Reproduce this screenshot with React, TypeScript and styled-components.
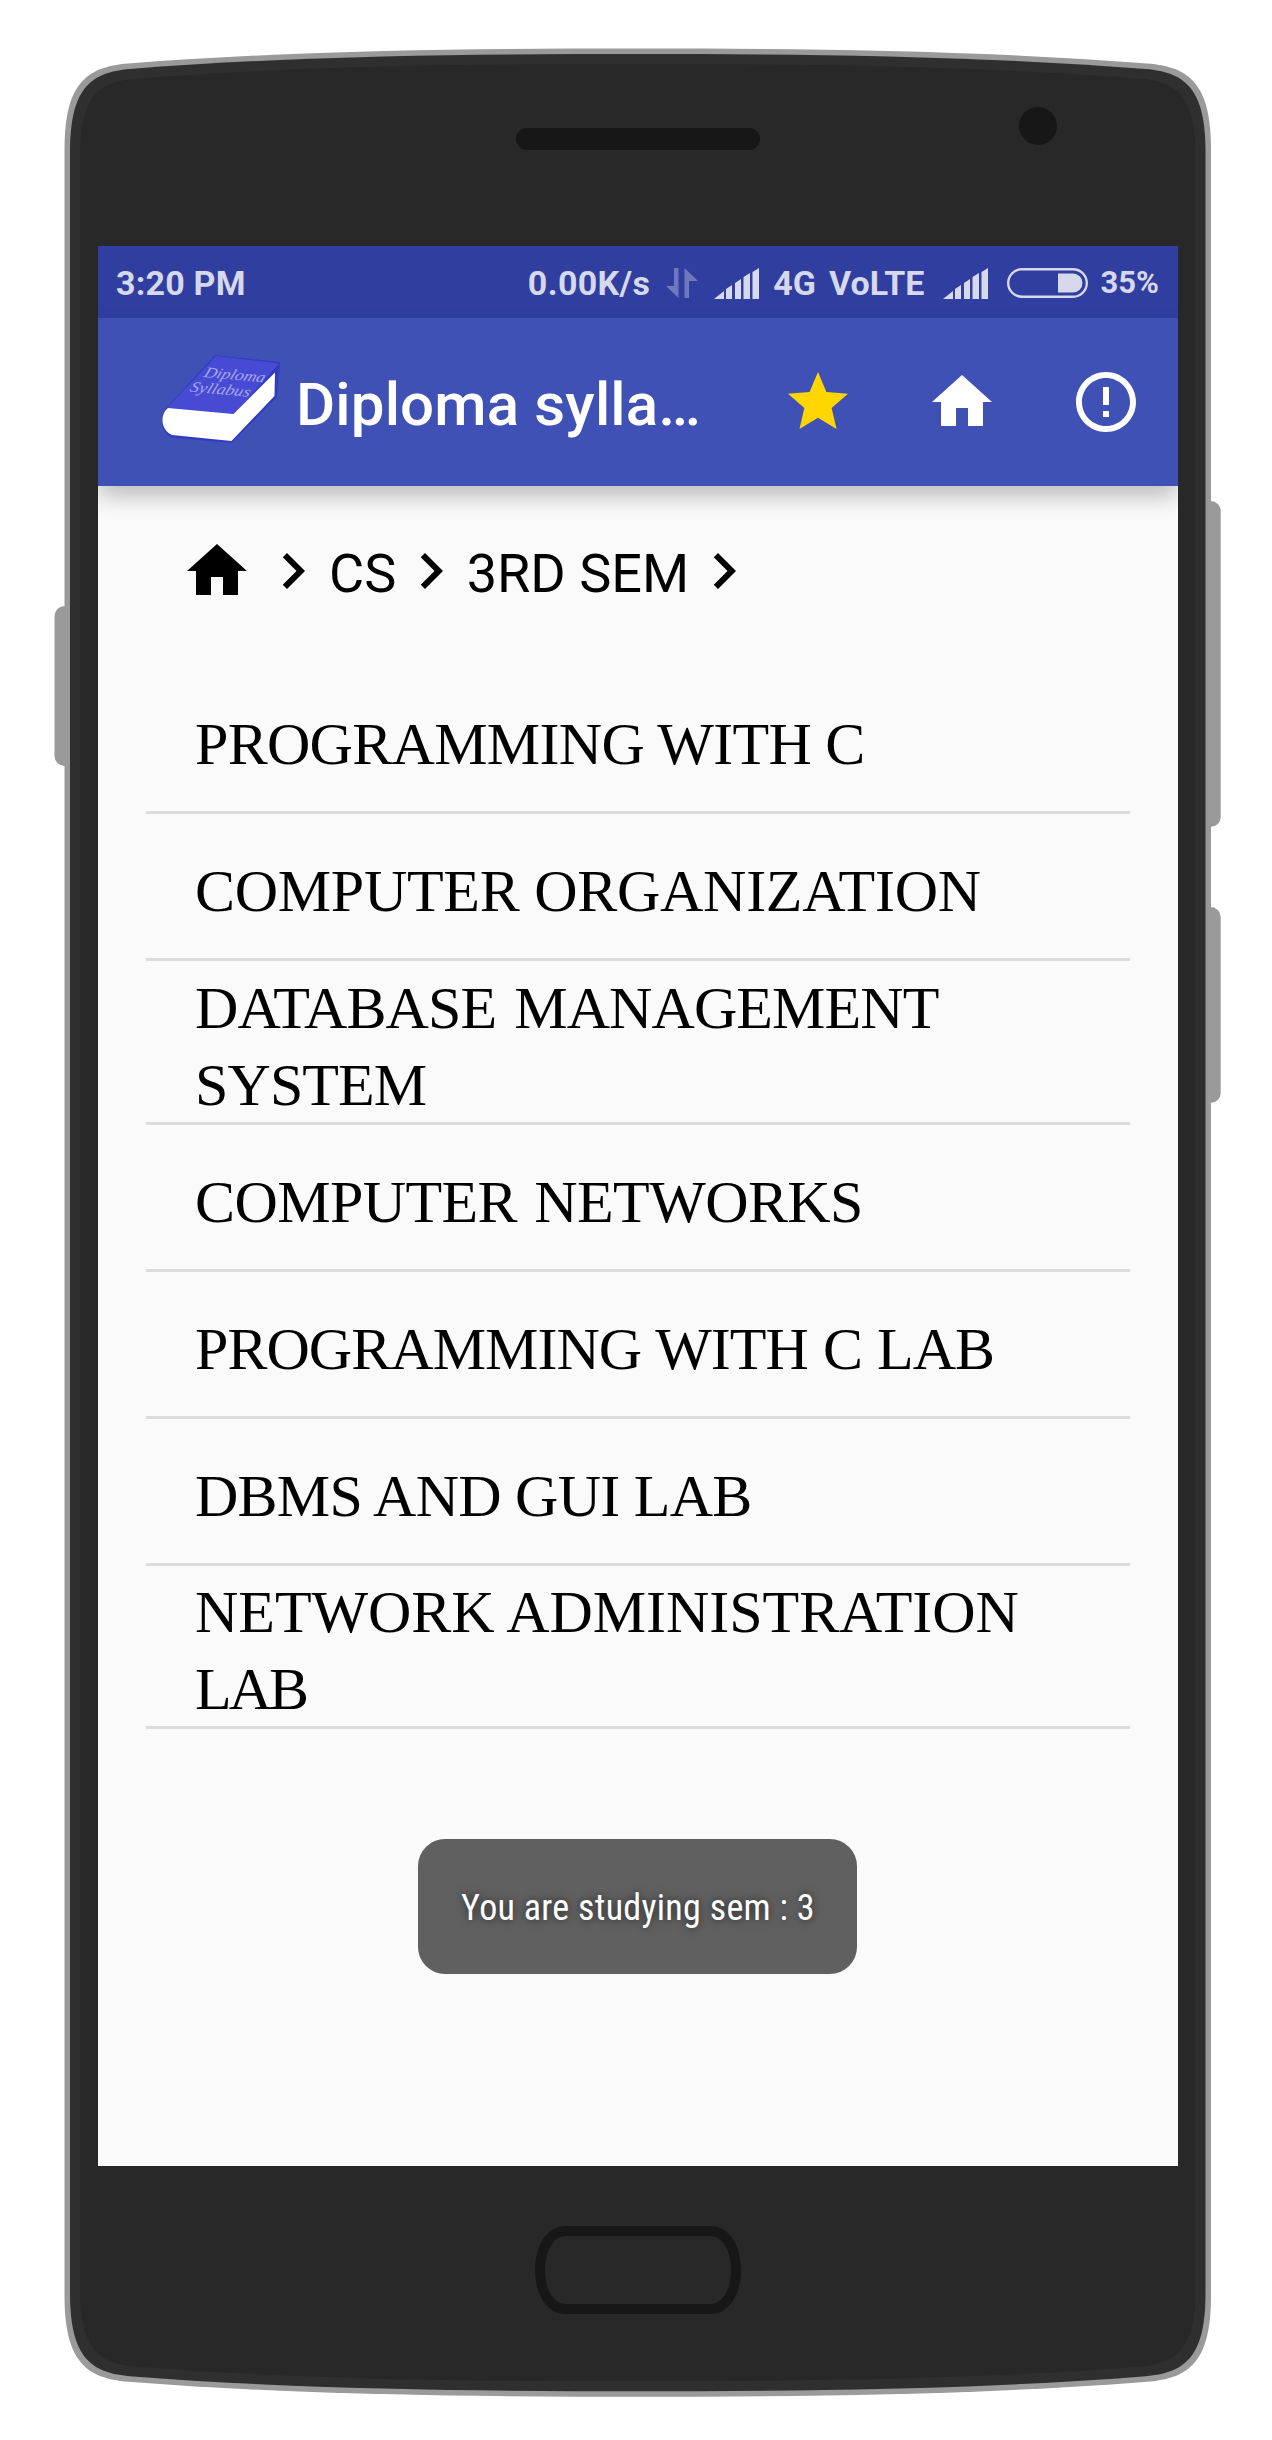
import React from "react";
import styled, { createGlobalStyle } from "styled-components";

const GlobalStyle = createGlobalStyle`
  * { box-sizing: border-box; }
  html, body { margin: 0; padding: 0; background: #fff; }
`;

const Stage = styled.main`
  position: relative;
  width: 1272px;
  height: 2440px;
  padding: 246px 94px 0 98px;
  background: #fff;
  overflow: hidden;
  font-family: Roboto, "Liberation Sans", sans-serif;
`;

const DeviceArt = styled.svg`
  position: absolute;
  inset: 0;
  display: block;
`;

const Screen = styled.section`
  position: relative;
  display: flex;
  flex-direction: column;
  width: 1080px;
  height: 1920px;
  background: #fafafa;
  overflow: hidden;
`;

const StatusBar = styled.header`
  display: flex;
  align-items: center;
  height: 72px;
  padding: 2px 19px 0 18px;
  background: #303e9f;
  color: #d6d8ec;
  flex: none;
`;

const StatusText = styled.span<{ $size?: number; $left?: number; $track?: number }>`
  font-size: ${(p) => p.$size ?? 34}px;
  font-weight: 700;
  line-height: 40px;
  letter-spacing: ${(p) => p.$track ?? 0}px;
  margin-left: ${(p) => p.$left ?? 0}px;
  white-space: nowrap;
`;

const StatusGroup = styled.div`
  display: flex;
  align-items: center;
  margin-left: auto;
`;

const Glyph = styled.svg<{ $left?: number; $size?: number }>`
  display: block;
  flex: none;
  margin-left: ${(p) => p.$left ?? 0}px;
  ${(p) => (p.$size ? `width: ${p.$size}px; height: ${p.$size}px;` : "")}
`;

const AppBar = styled.nav`
  position: relative;
  z-index: 1;
  display: flex;
  align-items: center;
  height: 168px;
  padding: 0 36px 0 54px;
  background: #3f51b5;
  box-shadow: 0 12px 21px -1px rgba(0, 0, 0, 0.24);
  color: #fff;
  flex: none;
`;

const Title = styled.h1`
  margin: 6px 0 0 12px;
  font-size: 60px;
  font-weight: 500;
  line-height: 72px;
  letter-spacing: 0.16px;
  white-space: nowrap;
`;

const Actions = styled.div`
  display: flex;
  gap: 72px;
  margin-left: auto;
`;

const Breadcrumb = styled.div`
  display: flex;
  align-items: center;
  height: 72px;
  margin: 49px 0 60px;
  padding-left: 83px;
  color: #000;
  flex: none;
`;

const Crumb = styled.span`
  margin: 5px -1.5px 0 0;
  font-size: 54px;
  line-height: 72px;
  white-space: nowrap;
`;

const SubjectList = styled.ul`
  margin: 0 48px;
  padding: 0;
  list-style: none;
`;

const Subject = styled.li<{ $height: number }>`
  display: flex;
  flex-direction: column;
  justify-content: center;
  height: ${(p) => p.$height}px;
  padding: 10px 0 0 49px;
  border-bottom: 3px solid #dcdcdc;
  color: #000;
  font-family: "Liberation Serif", "Times New Roman", serif;
  font-size: 60px;
  line-height: 77px;
  white-space: nowrap;
`;

const SubjectLine = styled.span<{ $track: number; $gap?: number }>`
  flex: none;
  letter-spacing: ${(p) => p.$track}px;
  word-spacing: ${(p) => p.$gap ?? 0}px;
`;

const Toast = styled.div`
  position: absolute;
  left: 320px;
  top: 1593px;
  display: flex;
  align-items: center;
  justify-content: center;
  width: 439px;
  height: 135px;
  padding: 2px 0 0 1px;
  border-radius: 27px;
  background: #606060;
  color: #fff;
`;

const ToastText = styled.span`
  font-family: "Roboto Condensed", Roboto, sans-serif;
  font-size: 36px;
  font-stretch: condensed;
  letter-spacing: 0.3px;
  line-height: 44px;
  white-space: nowrap;
  text-shadow: 0 0 8px rgba(0, 0, 0, 0.6);
`;

const MID_X = 637.75;
const MID_Y = 1222.6;

function shell(i: number) {
  const l = 64.5 + i;
  const t = 48.5 + i;
  const r = 2 * MID_X - l;
  const b = 2 * MID_Y - t;
  const fx = (x: number) => 2 * MID_X - x;
  const fy = (y: number) => 2 * MID_Y - y;
  const c1 = 85 + i * 0.75;
  const c2 = 128 + i * 0.3;
  const y0 = 150 + i * 0.4;
  const y1 = 85 + i * 0.9;
  const y2 = 67 + i;
  const y3 = 63.5 + i;
  return [
    `M${l} ${y0}C${l} ${y1} ${c1} ${y2} ${c2} ${y3}`,
    `C300 ${t + 1.5} 480 ${t} ${MID_X} ${t}`,
    `C${fx(480)} ${t} ${fx(300)} ${t + 1.5} ${fx(c2)} ${y3}`,
    `C${fx(c1)} ${y2} ${r} ${y1} ${r} ${y0}`,
    `V${fy(y0)}C${r} ${fy(y1)} ${fx(c1)} ${fy(y2)} ${fx(c2)} ${fy(y3)}`,
    `C${fx(300)} ${b - 1.5} ${fx(480)} ${b} ${MID_X} ${b}`,
    `C480 ${b} 300 ${b - 1.5} ${c2} ${fy(y3)}`,
    `C${c1} ${fy(y2)} ${l} ${fy(y1)} ${l} ${fy(y0)}Z`,
  ].join("");
}

function Device() {
  return (
    <DeviceArt width="1272" height="2440" viewBox="0 0 1272 2440" aria-hidden="true">
      <g fill="#9a9a9a">
        <rect x="54.5" y="606" width="30" height="160" rx="10" />
        <rect x="1190" y="501" width="30.7" height="326" rx="10" />
        <rect x="1190" y="907" width="30.7" height="196" rx="10" />
        <path d={shell(0)} />
      </g>
      <path d={shell(5.5)} fill="#2f2f2f" />
      <path d={shell(15.5)} fill="#282828" />
      <rect x="516" y="128" width="244" height="22" rx="11" fill="#171717" />
      <circle cx="1038" cy="126" r="19" fill="#171717" />
      <path
        d="M566 2231H710C726 2231 736 2248 736 2270S726 2309 710 2309H566C550 2309 540 2292 540 2270S550 2231 566 2231Z"
        fill="none"
        stroke="#171717"
        strokeWidth="10"
      />
    </DeviceArt>
  );
}

function Signal({ left }: { left: number }) {
  return (
    <Glyph $left={left} width="46" height="31" viewBox="0 0 46 31" fill="currentColor">
      <path d="M0 31 10 23V31ZM12 21l6-4V31h-6ZM21 15l6-4V31h-6ZM29.500 9l6.500-4V31h-6.500ZM38.500 4 45 0V31h-6.500Z" />
    </Glyph>
  );
}

function Arrows() {
  return (
    <Glyph $left={16} width="32" height="30" viewBox="0 0 32 30" fill="currentColor" opacity="0.38">
      <path d="M8 0h4.500v30L0 18h8ZM18.500 0 32 13h-9V30h-4.500Z" />
    </Glyph>
  );
}

function Battery() {
  return (
    <Glyph $left={18} width="81" height="30" viewBox="0 0 81 30">
      <rect x="1.200" y="1.200" width="78.600" height="27.600" rx="13.800" fill="none" stroke="currentColor" strokeWidth="2.400" />
      <path d="M51 5.500H66a9.500 9.500 0 0 1 0 19H51Z" fill="currentColor" />
    </Glyph>
  );
}

function BookLogo() {
  return (
    <Glyph width="132" height="100" viewBox="152 352 132 100">
      <path d="M215 355 280 362 277 397 232 443 171 437.500C159 430 160 415 167 407Z" fill="#2c33c9" opacity="0.7" />
      <path d="M216 356 279 363.500 234 414 167 408Z" fill="#474bd3" />
      <path d="M168 408 233.500 414 275 372.500 274.500 396 231.500 441 172 435C160 429 160 414 168 408Z" fill="#fff" />
      <g
        fill="#a4a8ec"
        fontFamily="'Liberation Serif', serif"
        fontStyle="italic"
        fontSize="15"
      >
        <text transform="translate(203 377) rotate(5) skewX(-16)" textLength="61" lengthAdjust="spacingAndGlyphs">Diploma</text>
        <text transform="translate(189 391.500) rotate(5) skewX(-16)" textLength="60" lengthAdjust="spacingAndGlyphs">Syllabus</text>
      </g>
    </Glyph>
  );
}

function Icon({ d, color = "currentColor", left = 0 }: { d: string; color?: string; left?: number }) {
  return (
    <Glyph $size={72} $left={left} viewBox="0 0 24 24" fill={color}>
      <path d={d} />
    </Glyph>
  );
}

const HOME = "M10 20v-6h4v6h5v-8h3L12 3 2 12h3v8z";
const CHEVRON = "M10 6 8.590 7.410 13.170 12l-4.580 4.590L10 18l6-6z";
const STAR = "M12 17.270 18.180 21l-1.640-7.030L22 9.240l-7.190-.61L12 2 9.190 8.630 2 9.240l5.460 4.730L5.820 21z";
const ALERT =
  "M11 15h2v2h-2zm0-8h2v6h-2zm.99-5C6.470 2 2 6.480 2 12s4.470 10 9.990 10C17.520 22 22 17.520 22 12S17.520 2 11.990 2zM12 20c-4.420 0-8-3.580-8-8s3.580-8 8-8 8 3.580 8 8-3.580 8-8 8z";

type Line = { text: string; track: number; gap?: number };

const SUBJECTS: { height: number; lines: Line[] }[] = [
  { height: 147, lines: [{ text: "PROGRAMMING WITH C", track: -0.7 }] },
  { height: 147, lines: [{ text: "COMPUTER ORGANIZATION", track: -0.28 }] },
  {
    height: 164,
    lines: [
      { text: "DATABASE MANAGEMENT", track: -0.92, gap: 4 },
      { text: "SYSTEM", track: -0.9 },
    ],
  },
  { height: 147, lines: [{ text: "COMPUTER NETWORKS", track: -0.6, gap: 3 }] },
  { height: 147, lines: [{ text: "PROGRAMMING WITH C LAB", track: -0.96, gap: 1 }] },
  { height: 147, lines: [{ text: "DBMS AND GUI LAB", track: -0.74 }] },
  {
    height: 163,
    lines: [
      { text: "NETWORK ADMINISTRATION", track: -0.05 },
      { text: "LAB", track: -3 },
    ],
  },
];

export default function App() {
  return (
    <Stage>
      <GlobalStyle />
      <Device />
      <Screen>
        <StatusBar>
          <StatusText $track={0.2}>3:20 PM</StatusText>
          <StatusGroup>
            <StatusText $track={0.35}>0.00K/s</StatusText>
            <Arrows />
            <Signal left={16} />
            <StatusText $left={13}>4G</StatusText>
            <StatusText $left={13}>VoLTE</StatusText>
            <Signal left={18} />
            <Battery />
            <StatusText $size={31} $left={13}>35%</StatusText>
          </StatusGroup>
        </StatusBar>
        <AppBar>
          <BookLogo />
          <Title>Diploma sylla…</Title>
          <Actions>
            <Icon d={STAR} color="#ffd600" />
            <Icon d={HOME} />
            <Icon d={ALERT} />
          </Actions>
        </AppBar>
        <Breadcrumb>
          <Icon d={HOME} />
          <Icon d={CHEVRON} left={4} />
          <Crumb>CS</Crumb>
          <Icon d={CHEVRON} />
          <Crumb>3RD SEM</Crumb>
          <Icon d={CHEVRON} />
        </Breadcrumb>
        <SubjectList>
          {SUBJECTS.map((subject) => (
            <Subject key={subject.lines[0].text} $height={subject.height}>
              {subject.lines.map((line) => (
                <SubjectLine key={line.text} $track={line.track} $gap={line.gap}>
                  {line.text}
                </SubjectLine>
              ))}
            </Subject>
          ))}
        </SubjectList>
        <Toast>
          <ToastText>You are studying sem : 3</ToastText>
        </Toast>
      </Screen>
    </Stage>
  );
}
